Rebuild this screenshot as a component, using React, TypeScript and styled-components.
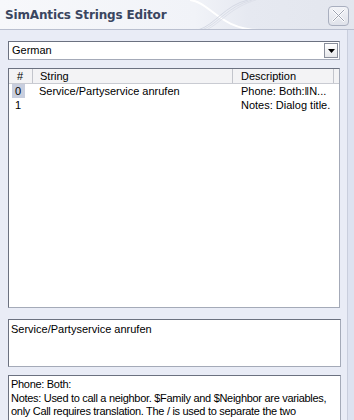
import React from "react";
import styled, { createGlobalStyle } from "styled-components";

const Global = createGlobalStyle`
  html, body { margin: 0; padding: 0; background: #e9ecf6; }
  body { font-family: "Liberation Sans", Arial, sans-serif; font-size: 11px; color: #000; }
  * { box-sizing: border-box; }
`;

const Window = styled.div`
  width: 354px;
  height: 420px;
  overflow: hidden;
  display: flex;
  flex-direction: column;
  background: #e9ecf6;
`;

const TitleBar = styled.div`
  position: relative;
  height: 30px;
  flex: 0 0 30px;
  display: flex;
  align-items: center;
  padding: 0 5px;
  background: linear-gradient(90deg, #f7f8fb 0%, #f1f3f8 55%, #e6e9f1 70%, #e3e6ee 100%);
  border-bottom: 1px solid #b9bfcf;
  overflow: hidden;
`;

const Title = styled.div`
  position: relative;
  z-index: 1;
  font-family: "DejaVu Sans", Verdana, sans-serif;
  font-weight: bold;
  font-size: 12px;
  color: #3a4660;
  letter-spacing: -0.15px;
  flex: 1;
  padding-top: 1px;
`;

const Wave = styled.svg`
  position: absolute;
  left: 190px;
  top: 0;
  width: 70px;
  height: 30px;
`;

const CloseButton = styled.div`
  position: relative;
  z-index: 1;
  width: 21px;
  height: 20px;
  margin-top: 2px;
  border: 1px solid #a9afbf;
  border-radius: 4px;
  background: linear-gradient(180deg, #f3f4f8 0%, #dfe2ea 100%);
  display: flex;
  align-items: center;
  justify-content: center;
`;

const Body = styled.div`
  flex: 1;
  display: flex;
  min-height: 0;
`;

const Content = styled.div`
  flex: 1;
  display: flex;
  flex-direction: column;
  padding: 11px 6px 0 8px;
  min-width: 0;
`;

const RightFrame = styled.div`
  width: 7px;
  flex: 0 0 7px;
  border-left: 1px solid #c9cedd;
  background: #dde2f0;
`;

const Combo = styled.div`
  height: 19px;
  flex: 0 0 19px;
  width: 332px;
  display: flex;
  align-items: center;
  background: #fff;
  border: 1px solid #6b7180;
  border-right-color: #a4aab8;
  border-bottom-color: #a4aab8;
  padding: 0 1px 0 3px;
`;

const ComboText = styled.div`
  flex: 1;
  line-height: 15px;
`;

const ComboArrow = styled.div`
  width: 14px;
  height: 15px;
  border: 1px solid #8a8f9c;
  background: linear-gradient(180deg, #ffffff 0%, #e6e7ea 100%);
  display: flex;
  align-items: center;
  justify-content: center;
`;

const List = styled.div`
  margin-top: 8px;
  height: 240px;
  flex: 0 0 240px;
  width: 332px;
  background: #fff;
  border: 1px solid #6b7180;
  border-right-color: #a4aab8;
  border-bottom-color: #a4aab8;
  display: flex;
  flex-direction: column;
`;

const HeaderRow = styled.div`
  display: flex;
  height: 15px;
  flex: 0 0 15px;
  background: #f3f3f5;
  border-bottom: 1px solid #c9cbd2;
`;

const HeaderCell = styled.div<{ $w: number; $pad: number }>`
  width: ${(p) => p.$w}px;
  flex: 0 0 ${(p) => p.$w}px;
  padding-left: ${(p) => p.$pad}px;
  line-height: 14px;
  border-right: 1px solid #c3c5cc;
  white-space: nowrap;
  overflow: hidden;
`;

const HeaderFill = styled.div`
  flex: 1;
`;

const Row = styled.div`
  display: flex;
  height: 14px;
  line-height: 14px;
`;

const Cell = styled.div<{ $w: number; $pad: number }>`
  width: ${(p) => p.$w}px;
  flex: 0 0 ${(p) => p.$w}px;
  padding-left: ${(p) => p.$pad}px;
  white-space: nowrap;
  overflow: hidden;
`;

const Selected = styled.span<{ $on: boolean }>`
  display: inline-block;
  padding: 0 4px 0 3px;
  background: ${(p) => (p.$on ? "#c8cede" : "transparent")};
`;

const TextBox = styled.div<{ $h: number; $mt: number; $tight?: boolean }>`
  margin-top: ${(p) => p.$mt}px;
  height: ${(p) => p.$h}px;
  flex: 0 0 ${(p) => p.$h}px;
  width: 333px;
  background: #fff;
  border: 1px solid #6b7180;
  border-right-color: #a4aab8;
  border-bottom-color: #a4aab8;
  padding: 2px 0 0 2px;
  line-height: ${(p) => (p.$tight ? "13.5px" : "14px")};
  letter-spacing: ${(p) => (p.$tight ? "-0.3px" : "0")};
  white-space: pre-wrap;
  overflow: hidden;
`;

const cols = [
  { label: "#", w: 24, pad: 8 },
  { label: "String", w: 200, pad: 7 },
  { label: "Description", w: 101, pad: 8 },
];

const rows = [
  { n: "0", s: "Service/Partyservice anrufen", d: "Phone: Both:\u2016N...", sel: true },
  { n: "1", s: "", d: "Notes: Dialog title.", sel: false },
];

export default function App() {
  return (
    <>
      <Global />
      <Window>
        <TitleBar>
          <Wave viewBox="0 0 70 30" fill="none">
            <path d="M0 0 C 20 2, 30 30, 70 30" stroke="#ffffff" strokeWidth="2" />
            <path d="M8 30 C 25 25, 35 5, 58 0" stroke="#d5d9e4" strokeWidth="1" />
            <path d="M12 30 C 28 24, 38 6, 62 0" stroke="#d9dde7" strokeWidth="1" />
            <path d="M16 30 C 31 23, 41 7, 66 0" stroke="#dde0ea" strokeWidth="1" />
          </Wave>
          <Title>SimAntics Strings Editor</Title>
          <CloseButton>
            <svg width="13" height="13" viewBox="0 0 13 13">
              <path d="M1 1 L12 12 M12 1 L1 12" stroke="#ffffff" strokeWidth="2.4" strokeLinecap="round" />
              <path d="M1 1 L12 12 M12 1 L1 12" stroke="#9aa0b0" strokeWidth="1" strokeLinecap="round" />
            </svg>
          </CloseButton>
        </TitleBar>
        <Body>
          <Content>
            <Combo>
              <ComboText>German</ComboText>
              <ComboArrow>
                <svg width="7" height="4" viewBox="0 0 7 4">
                  <path d="M0 0 H7 L3.5 4 Z" fill="#000" />
                </svg>
              </ComboArrow>
            </Combo>
            <List>
              <HeaderRow>
                {cols.map((c) => (
                  <HeaderCell key={c.label} $w={c.w} $pad={c.pad}>
                    {c.label}
                  </HeaderCell>
                ))}
                <HeaderFill />
              </HeaderRow>
              {rows.map((r) => (
                <Row key={r.n}>
                  <Cell $w={24} $pad={3}>
                    <Selected $on={r.sel}>{r.n}</Selected>
                  </Cell>
                  <Cell $w={200} $pad={6}>{r.s}</Cell>
                  <Cell $w={101} $pad={8}>{r.d}</Cell>
                </Row>
              ))}
            </List>
            <TextBox $h={48} $mt={11}>Service/Partyservice anrufen</TextBox>
            <TextBox $h={46} $mt={8} $tight>
              {"Phone: Both:\nNotes: Used to call a neighbor. $Family and $Neighbor are variables, only Call requires translation. The / is used to separate the two"}
            </TextBox>
          </Content>
          <RightFrame />
        </Body>
      </Window>
    </>
  );
}
